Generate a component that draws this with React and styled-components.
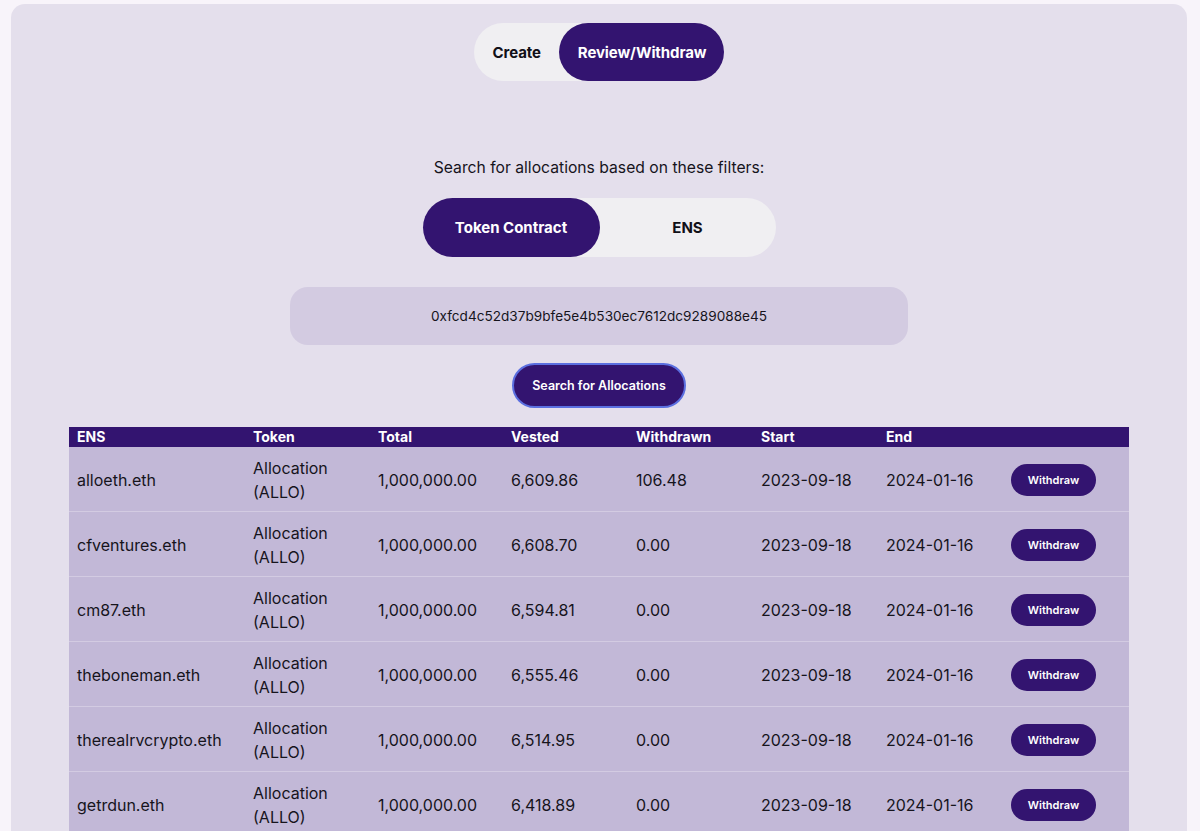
import React, { useState } from 'react'
import styled, { createGlobalStyle } from 'styled-components'

const GlobalStyle = createGlobalStyle`
  html, body {
    margin: 0;
    padding: 0;
    background: #f8f4fa;
    font-family: Inter, "Noto Sans", sans-serif;
    color: #111018;
  }
  * { box-sizing: border-box; }
`

const rows = [
  { ens: 'alloeth.eth', vested: '6,609.86', withdrawn: '106.48' },
  { ens: 'cfventures.eth', vested: '6,608.70', withdrawn: '0.00' },
  { ens: 'cm87.eth', vested: '6,594.81', withdrawn: '0.00' },
  { ens: 'theboneman.eth', vested: '6,555.46', withdrawn: '0.00' },
  { ens: 'therealrvcrypto.eth', vested: '6,514.95', withdrawn: '0.00' },
  { ens: 'getrdun.eth', vested: '6,418.89', withdrawn: '0.00' },
]

const columns = ['ENS', 'Token', 'Total', 'Vested', 'Withdrawn', 'Start', 'End', '']

function App() {
  const [mode, setMode] = useState('review')
  const [filter, setFilter] = useState('token')

  return (
    <>
      <GlobalStyle />
      <Page>
        <Card>
          <Toggle>
            <ToggleButton active={mode === 'create'} onClick={() => setMode('create')}>Create</ToggleButton>
            <ToggleButton active={mode === 'review'} onClick={() => setMode('review')}>Review/Withdraw</ToggleButton>
          </Toggle>

          <Caption>Search for allocations based on these filters:</Caption>

          <FilterToggle>
            <FilterButton active={filter === 'token'} onClick={() => setFilter('token')}>Token Contract</FilterButton>
            <FilterButton active={filter === 'ens'} onClick={() => setFilter('ens')}>ENS</FilterButton>
          </FilterToggle>

          <AddressInput defaultValue="0xfcd4c52d37b9bfe5e4b530ec7612dc9289088e45" />

          <SearchButton>Search for Allocations</SearchButton>

          <Table>
            <HeadRow>
              {columns.map((c, i) => <HeadCell key={i}>{c}</HeadCell>)}
            </HeadRow>
            {rows.map((r) => (
              <Row key={r.ens}>
                <Cell>{r.ens}</Cell>
                <Cell>Allocation<br />(ALLO)</Cell>
                <Cell>1,000,000.00</Cell>
                <Cell>{r.vested}</Cell>
                <Cell>{r.withdrawn}</Cell>
                <Cell>2023-09-18</Cell>
                <Cell>2024-01-16</Cell>
                <Cell><WithdrawButton>Withdraw</WithdrawButton></Cell>
              </Row>
            ))}
          </Table>
        </Card>
      </Page>
    </>
  )
}

export default App

const Page = styled.div`
  padding: 4px 13px 0 11px;
  height: 831px;
  overflow: hidden;
`

const Card = styled.div`
  background: #e4dfec;
  border-radius: 14px;
  min-height: 900px;
  padding-top: 19px;
  display: flex;
  flex-direction: column;
  align-items: center;
`

const Toggle = styled.div`
  display: flex;
  background: #f0eff2;
  border-radius: 29px;
  height: 58px;
`

const ToggleButton = styled.button`
  border: none;
  height: 58px;
  padding: 0 18px 0 19px;
  border-radius: 29px;
  font-family: inherit;
  font-size: 15px;
  font-weight: 700;
  letter-spacing: -0.1px;
  cursor: pointer;
  background: ${p => (p.active ? '#331470' : 'transparent')};
  color: ${p => (p.active ? '#ffffff' : '#111018')};
`

const Caption = styled.p`
  margin: 77px 0 0;
  font-size: 15.7px;
  line-height: 20px;
  color: #16141c;
`

const FilterToggle = styled.div`
  display: grid;
  grid-template-columns: 177px 176px;
  margin-top: 20px;
  background: #f0eff2;
  border-radius: 30px;
`

const FilterButton = styled.button`
  border: none;
  height: 59px;
  border-radius: 30px;
  font-family: inherit;
  font-size: 15px;
  font-weight: 700;
  cursor: pointer;
  background: ${p => (p.active ? '#331470' : 'transparent')};
  color: ${p => (p.active ? '#ffffff' : '#111018')};
`

const AddressInput = styled.input`
  margin-top: 30px;
  width: 618px;
  height: 58px;
  border: none;
  outline: none;
  border-radius: 18px;
  background: #d3cbe1;
  text-align: center;
  font-family: inherit;
  font-size: 13.6px;
  color: #16141c;
`

const SearchButton = styled.button`
  margin-top: 18px;
  width: 174px;
  height: 45px;
  border-radius: 23px;
  border: 2px solid #5b6fe0;
  background: #331470;
  color: #ffffff;
  font-family: inherit;
  font-size: 12.5px;
  font-weight: 600;
  cursor: pointer;
`

const grid = `
  display: grid;
  grid-template-columns: 176px 125px 133px 125px 125px 125px 125px 126px;
`

const Table = styled.div`
  margin-top: 19px;
  width: 1060px;
`

const HeadRow = styled.div`
  ${grid}
  background: #331470;
  height: 20px;
  align-items: center;
`

const HeadCell = styled.div`
  padding-left: 8px;
  color: #ffffff;
  font-size: 14px;
  font-weight: 700;
  line-height: 20px;
`

const Row = styled.div`
  ${grid}
  background: #c2b8d7;
  align-items: center;
  min-height: 65px;
  border-bottom: 1px solid #d3cbe2;
`

const Cell = styled.div`
  padding: 9px 0 7px 8px;
  font-size: 16px;
  line-height: 24px;
  color: #16141c;
`

const WithdrawButton = styled.button`
  width: 85px;
  height: 32px;
  border: none;
  border-radius: 16px;
  background: #331470;
  color: #ffffff;
  font-family: inherit;
  font-size: 11px;
  font-weight: 600;
  cursor: pointer;
`
